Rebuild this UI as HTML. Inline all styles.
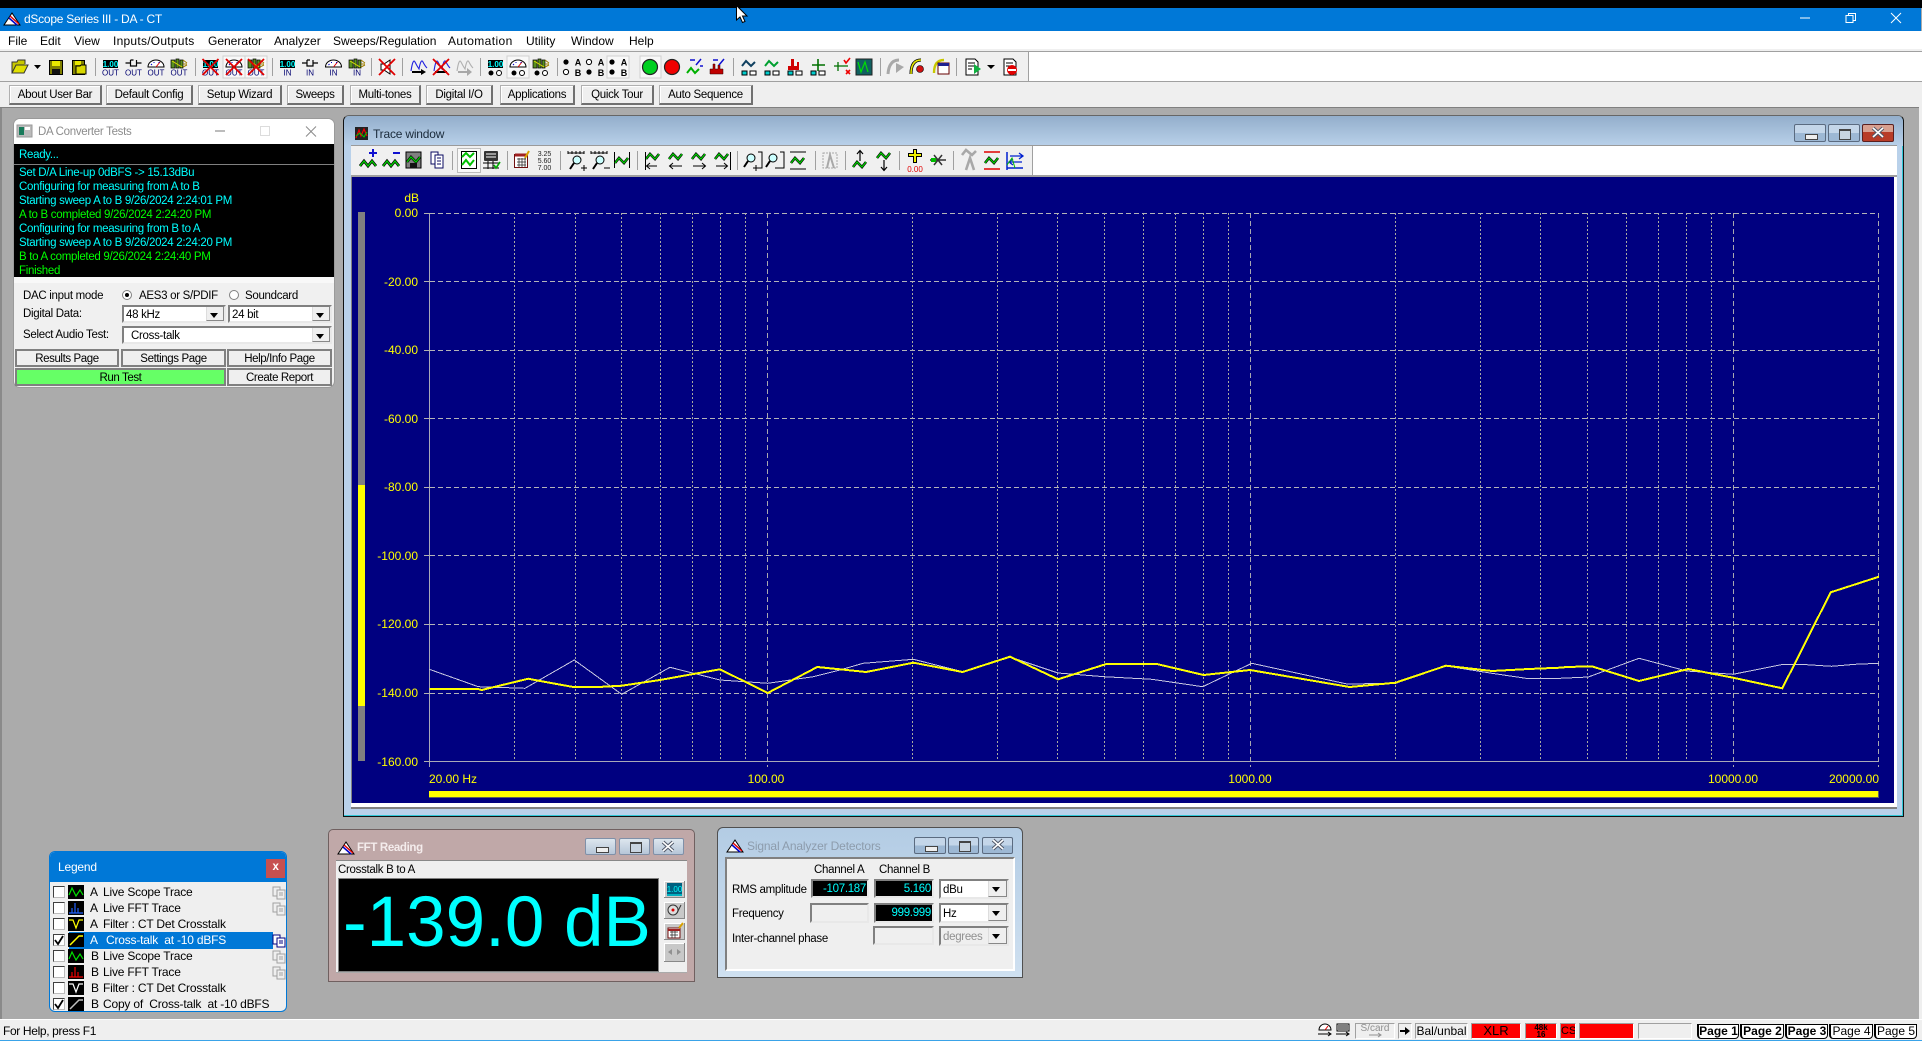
<!DOCTYPE html>
<html><head><meta charset="utf-8"><title>dScope Series III - DA - CT</title>
<style>
html,body{margin:0;padding:0;width:1922px;height:1041px;overflow:hidden;background:#ababab;font:11.5px "Liberation Sans",sans-serif;letter-spacing:-.3px;color:#000}
.a{position:absolute;box-sizing:border-box}
.t{position:absolute;white-space:nowrap;line-height:14px;height:14px}
.t:not(.m):not(.lg){margin-top:1px}
.m{font-size:12px;letter-spacing:0}
.lg{font-size:12px;letter-spacing:-.2px}
.btn{position:absolute;box-sizing:border-box;background:#efefef;border:1px solid #b0b0b0;border-right:2px solid #707070;border-bottom:2px solid #707070;text-align:center;white-space:nowrap;line-height:19px;box-shadow:inset 1px 1px 0 #fff}
.fb{position:absolute;box-sizing:border-box;background:#efefef;border:2px solid #808080;text-align:center;line-height:16px;white-space:nowrap;letter-spacing:-.4px}
.cb{position:absolute;box-sizing:border-box;background:#fff;border:2px solid;border-color:#808080 #e8e8e8 #e8e8e8 #808080;line-height:17px;white-space:nowrap;padding-left:2px}
.cb i{position:absolute;right:0;top:0;bottom:0;width:16px;background:#efefef;border-left:1px solid #ddd;border-bottom:1px solid #888;border-right:1px solid #888}
.cb i:after{content:"";position:absolute;left:3px;top:6px;border:4px solid transparent;border-top:5px solid #000;border-bottom:0}
.wb{position:absolute;box-sizing:border-box;border:1px solid #5b6b80;border-radius:2px;background:linear-gradient(#c4d6e9 0 50%,#9db8d4 50% 100%)}
.mi{position:absolute;left:10px;width:11px;height:4px;background:#eee;border:1px solid #444}
.ri{position:absolute;left:10px;width:10px;height:8px;background:#c8d4e0;border:1px solid #444;border-top-width:2px}
.fd{position:absolute;box-sizing:border-box;background:#000;color:#0ff;border:2px solid;border-color:#808080 #e8e8e8 #e8e8e8 #808080;text-align:right;line-height:16px;padding-right:1px}
.fe{position:absolute;box-sizing:border-box;background:#efefef;border:2px solid;border-color:#808080 #e8e8e8 #e8e8e8 #808080}
.st{position:absolute;box-sizing:border-box;top:1023px;height:16px;border:1px solid;border-color:#a0a0a0 #fff #fff #a0a0a0;text-align:center;line-height:14px;white-space:nowrap;overflow:hidden;font-size:12px;letter-spacing:0}
.pg{position:absolute;top:1024px;height:15px;box-sizing:border-box;border:1px solid #000;border-left-width:2px;border-radius:0 0 4px 4px;background:#fff;text-align:center;line-height:13px;white-space:nowrap;font-size:12px;letter-spacing:0}
.ck{position:absolute;left:53px;width:12px;height:12px;box-sizing:border-box;background:#fff;border:1px solid;border-color:#404040 #bbb #bbb #404040}
svg text{font-family:"Liberation Sans",sans-serif;letter-spacing:0}
</style></head><body>

<!-- frame bars -->
<div class="a" style="left:0;top:0;width:1922px;height:8px;background:#000"></div>
<div class="a" style="left:0;top:8px;width:1921px;height:23px;background:#0078d7"></div>
<div class="a" style="left:0;top:31px;width:1922px;height:19px;background:#fff"></div>
<div class="a" style="left:0;top:49px;width:1922px;height:2px;background:#f0f0f0"></div>
<div class="a" style="left:0;top:51px;width:1922px;height:1px;background:#a0a0a0"></div>
<div class="a" style="left:0;top:52px;width:1922px;height:29px;background:#fff"></div>
<div class="a" style="left:0;top:52px;width:1029px;height:29px;background:#f0f0f0;border-right:1px solid #a0a0a0"></div>
<div class="a" style="left:0;top:81px;width:1922px;height:1px;background:#a0a0a0"></div>
<div class="a" style="left:0;top:82px;width:1922px;height:25px;background:#efefef"></div>
<div class="a" style="left:0;top:107px;width:1920px;height:1px;background:#808080"></div>
<div class="a" style="left:0;top:108px;width:2px;height:912px;background:#8a8a8a"></div>
<div class="a" style="left:1919px;top:107px;width:3px;height:913px;background:#efefef"></div>
<div class="a" style="left:0;top:1019px;width:1922px;height:1px;background:#fff"></div>
<div class="a" style="left:0;top:1020px;width:1922px;height:20px;background:#efefef"></div>
<div class="a" style="left:0;top:1040px;width:1922px;height:1px;background:#3aa3e8"></div>

<div class="t m" style="left:24px;top:12px;color:#fff;letter-spacing:-.25px">dScope Series III - DA - CT</div>
<div class="t m" style="left:8px;top:34px">File</div>
<div class="t m" style="left:40px;top:34px">Edit</div>
<div class="t m" style="left:74px;top:34px">View</div>
<div class="t m" style="left:113px;top:34px;letter-spacing:.25px">Inputs/Outputs</div>
<div class="t m" style="left:208px;top:34px">Generator</div>
<div class="t m" style="left:274px;top:34px">Analyzer</div>
<div class="t m" style="left:333px;top:34px">Sweeps/Regulation</div>
<div class="t m" style="left:448px;top:34px;letter-spacing:.4px">Automation</div>
<div class="t m" style="left:526px;top:34px">Utility</div>
<div class="t m" style="left:571px;top:34px">Window</div>
<div class="t m" style="left:629px;top:34px">Help</div>

<div class="btn" style="left:9px;top:85px;width:93px;height:20px">About User Bar</div>
<div class="btn" style="left:106px;top:85px;width:87px;height:20px">Default Config</div>
<div class="btn" style="left:198px;top:85px;width:84px;height:20px">Setup Wizard</div>
<div class="btn" style="left:287px;top:85px;width:57px;height:20px">Sweeps</div>
<div class="btn" style="left:350px;top:85px;width:71px;height:20px">Multi-tones</div>
<div class="btn" style="left:426px;top:85px;width:67px;height:20px">Digital I/O</div>
<div class="btn" style="left:500px;top:85px;width:75px;height:20px">Applications</div>
<div class="btn" style="left:581px;top:85px;width:73px;height:20px">Quick Tour</div>
<div class="btn" style="left:659px;top:85px;width:94px;height:20px">Auto Sequence</div>

<!-- DA Converter window -->
<div class="a" style="left:14px;top:119px;width:320px;height:268px;background:#f0f0f0;border-radius:6px;overflow:hidden;box-shadow:0 0 0 1px #9a9a9a">
 <div class="a" style="left:0;top:0;width:320px;height:25px;background:#fff"></div>
 <div class="a" style="left:0;top:25px;width:320px;height:133px;background:#000"></div>
 <div class="a" style="left:0;top:45px;width:320px;height:1px;background:#808080"></div>
 <div class="a" style="left:0;top:158px;width:320px;height:6px;background:#f8f8f8"></div>
</div>
<div class="t" style="left:38px;top:124px;color:#8c8c8c">DA Converter Tests</div>
<div class="t" style="left:19px;top:147px;color:#0ff">Ready...</div>
<div class="t" style="left:19px;top:165px;color:#0ff">Set D/A Line-up 0dBFS -&gt; 15.13dBu</div>
<div class="t" style="left:19px;top:179px;color:#0ff">Configuring for measuring from A to B</div>
<div class="t" style="left:19px;top:193px;color:#0ff">Starting sweep A to B 9/26/2024 2:24:01 PM</div>
<div class="t" style="left:19px;top:207px;color:#0f0">A to B completed 9/26/2024 2:24:20 PM</div>
<div class="t" style="left:19px;top:221px;color:#0ff">Configuring for measuring from B to A</div>
<div class="t" style="left:19px;top:235px;color:#0ff">Starting sweep A to B 9/26/2024 2:24:20 PM</div>
<div class="t" style="left:19px;top:249px;color:#0f0">B to A completed 9/26/2024 2:24:40 PM</div>
<div class="t" style="left:19px;top:263px;color:#0f0">Finished</div>
<div class="t" style="left:23px;top:288px">DAC input mode</div>
<div class="t" style="left:139px;top:288px">AES3 or S/PDIF</div>
<div class="t" style="left:245px;top:288px">Soundcard</div>
<div class="t" style="left:23px;top:306px">Digital Data:</div>
<div class="t" style="left:23px;top:327px">Select Audio Test:</div>
<div class="cb" style="left:122px;top:305px;width:104px;height:18px">48 kHz<i></i></div>
<div class="cb" style="left:228px;top:305px;width:104px;height:18px">24 bit<i></i></div>
<div class="cb" style="left:122px;top:326px;width:210px;height:18px;padding-left:7px">Cross-talk<i></i></div>
<div class="fb" style="left:15px;top:349px;width:104px;height:18px">Results Page</div>
<div class="fb" style="left:121px;top:349px;width:105px;height:18px">Settings Page</div>
<div class="fb" style="left:227px;top:349px;width:105px;height:18px">Help/Info Page</div>
<div class="fb" style="left:15px;top:368px;width:211px;height:18px;background:#66ff66">Run Test</div>
<div class="fb" style="left:227px;top:368px;width:105px;height:18px">Create Report</div>

<!-- Trace window -->
<div class="a" style="left:343px;top:115px;width:1561px;height:702px;background:#b9d1ea;border:1px solid #111;border-top-color:#666;border-radius:6px 6px 0 0;box-shadow:inset -1px -1px 0 #30c8d8"></div>
<div class="a" style="left:344px;top:116px;width:1559px;height:30px;background:linear-gradient(#93aecb,#b9d1ea);border-radius:5px 5px 0 0"></div>
<div class="a" style="left:351px;top:145px;width:1546px;height:1px;background:#9a9a9a"></div>
<div class="a" style="left:351px;top:146px;width:1546px;height:29px;background:#fff"></div>
<div class="a" style="left:351px;top:146px;width:682px;height:29px;background:#f0f0f0;border-right:1px solid #a0a0a0"></div>
<div class="a" style="left:351px;top:175px;width:1546px;height:2px;background:#a0a0a0"></div>
<div class="a" style="left:352px;top:177px;width:1542px;height:626px;background:#000080"></div>
<div class="a" style="left:351px;top:177px;width:1px;height:630px;background:#808080"></div>
<div class="a" style="left:351px;top:803px;width:1546px;height:4px;background:#fff"></div>
<div class="a" style="left:1894px;top:177px;width:3px;height:630px;background:#fff"></div>
<div class="a" style="left:351px;top:807px;width:1546px;height:2px;background:#808080"></div>
<div class="t m" style="left:373px;top:127px;color:#1a2a3a;letter-spacing:-.2px">Trace window</div>
<div class="wb" style="left:1794px;top:124px;width:32px;height:18px"><div class="mi" style="top:9px"></div></div>
<div class="wb" style="left:1828px;top:124px;width:32px;height:18px"><div class="ri" style="top:4px"></div></div>
<div class="wb" style="left:1862px;top:124px;width:32px;height:18px;border-color:#5a2020;background:linear-gradient(#d8a090 0 45%,#b83c28 45% 100%)"></div>

<!-- Legend -->
<div class="a" style="left:49px;top:851px;width:238px;height:161px;background:#efefef;border:1px solid #0078d7;border-radius:6px;overflow:hidden">
 <div class="a" style="left:0;top:0;width:238px;height:30px;background:#0078d7"></div>
 <div class="a" style="left:19px;top:80px;width:204px;height:17px;background:#0078d7"></div>
</div>
<div class="t lg" style="left:58px;top:860px;color:#fff">Legend</div>
<div class="a" style="left:266px;top:859px;width:19px;height:19px;background:#c75050;color:#fff;text-align:center;font-weight:bold;line-height:17px">x</div>
<div class="ck" style="top:886px"></div><div class="ck" style="top:902px"></div><div class="ck" style="top:918px"></div><div class="ck" style="top:934px"></div><div class="ck" style="top:950px"></div><div class="ck" style="top:966px"></div><div class="ck" style="top:982px"></div><div class="ck" style="top:998px"></div>
<div class="t lg" style="left:90px;top:885px">A</div><div class="t lg" style="left:103px;top:885px">Live Scope Trace</div>
<div class="t lg" style="left:90px;top:901px">A</div><div class="t lg" style="left:103px;top:901px">Live FFT Trace</div>
<div class="t lg" style="left:90px;top:917px">A</div><div class="t lg" style="left:103px;top:917px">Filter : CT Det Crosstalk</div>
<div class="t lg" style="left:90px;top:933px;color:#fff">A</div><div class="t lg" style="left:106px;top:933px;color:#fff;white-space:pre">Cross-talk  at -10 dBFS</div>
<div class="t lg" style="left:91px;top:949px">B</div><div class="t lg" style="left:103px;top:949px">Live Scope Trace</div>
<div class="t lg" style="left:91px;top:965px">B</div><div class="t lg" style="left:103px;top:965px">Live FFT Trace</div>
<div class="t lg" style="left:91px;top:981px">B</div><div class="t lg" style="left:103px;top:981px">Filter : CT Det Crosstalk</div>
<div class="t lg" style="left:91px;top:997px">B</div><div class="t lg" style="left:103px;top:997px;white-space:pre">Copy of  Cross-talk  at -10 dBFS</div>

<!-- FFT Reading -->
<div class="a" style="left:328px;top:829px;width:367px;height:153px;background:#c0a8a8;border:1px solid #706060;border-radius:5px 5px 0 0"></div>
<div class="a" style="left:336px;top:860px;width:351px;height:113px;background:#efefef;border-top:1px solid #888;border-bottom:1px solid #aaa"></div>
<div class="a" style="left:338px;top:878px;width:321px;height:94px;background:#000;border:1px solid #808080"></div>
<div class="t" style="left:357px;top:840px;color:#f4ecec;font-weight:bold;letter-spacing:-.35px">FFT Reading</div>
<div class="t" style="left:338px;top:862px">Crosstalk B to A</div>
<div class="t" style="left:343px;top:883px;margin-top:0;height:80px;line-height:80px;font-size:71px;letter-spacing:0;color:#0ff">-139.0 dB</div>
<div class="wb" style="left:585px;top:838px;width:31px;height:17px;border-color:#8090a8;background:linear-gradient(#dde6ee,#b6c6d8)"><div class="mi" style="top:8px"></div></div>
<div class="wb" style="left:619px;top:838px;width:31px;height:17px;border-color:#8090a8;background:linear-gradient(#dde6ee,#b6c6d8)"><div class="ri" style="top:3px"></div></div>
<div class="wb" style="left:653px;top:838px;width:31px;height:17px;border-color:#8090a8;background:linear-gradient(#dde6ee,#b6c6d8)"></div>
<div class="a" style="left:664px;top:881px;width:21px;height:17px;background:#c8c8c8;border-right:1px solid #888;border-bottom:1px solid #888;box-shadow:inset 1px 1px 0 #fff"></div>
<div class="a" style="left:664px;top:902px;width:21px;height:17px;background:#c8c8c8;border-right:1px solid #888;border-bottom:1px solid #888;box-shadow:inset 1px 1px 0 #fff"></div>
<div class="a" style="left:664px;top:923px;width:21px;height:17px;background:#c8c8c8;border-right:1px solid #888;border-bottom:1px solid #888;box-shadow:inset 1px 1px 0 #fff"></div>
<div class="a" style="left:664px;top:943px;width:21px;height:19px;background:#c8c8c8;border-right:1px solid #888;border-bottom:1px solid #888;box-shadow:inset 1px 1px 0 #fff"></div>

<!-- Signal Analyzer Detectors -->
<div class="a" style="left:717px;top:827px;width:306px;height:151px;background:linear-gradient(#b3cce4,#cfe0f0);border:1px solid #505050;border-radius:6px 6px 0 0"></div>
<div class="a" style="left:725px;top:857px;width:290px;height:114px;background:#efefef;border:2px solid;border-color:#808080 #fff #fff #808080"></div>
<div class="t m" style="left:747px;top:839px;color:#8d9cac;letter-spacing:-.15px">Signal Analyzer Detectors</div>
<div class="wb" style="left:914px;top:837px;width:32px;height:17px"><div class="mi" style="top:8px"></div></div>
<div class="wb" style="left:948px;top:837px;width:31px;height:17px"><div class="ri" style="top:3px"></div></div>
<div class="wb" style="left:982px;top:837px;width:31px;height:17px"></div>
<div class="t" style="left:814px;top:862px">Channel A</div>
<div class="t" style="left:879px;top:862px">Channel B</div>
<div class="t" style="left:732px;top:882px">RMS amplitude</div>
<div class="t" style="left:732px;top:906px">Frequency</div>
<div class="t" style="left:732px;top:931px">Inter-channel phase</div>
<div class="fd" style="left:811px;top:879px;width:58px;height:19px">-107.187</div>
<div class="fd" style="left:874px;top:879px;width:60px;height:19px">5.160</div>
<div class="cb" style="left:939px;top:879px;width:70px;height:20px;line-height:18px">dBu<i style="width:17px"></i></div>
<div class="fe" style="left:810px;top:903px;width:59px;height:20px"></div>
<div class="fd" style="left:874px;top:903px;width:60px;height:20px">999.999</div>
<div class="cb" style="left:939px;top:903px;width:70px;height:20px;line-height:18px">Hz<i style="width:17px"></i></div>
<div class="fe" style="left:873px;top:926px;width:61px;height:19px"></div>
<div class="cb" style="left:939px;top:926px;width:70px;height:20px;line-height:18px;background:#efefef;color:#909090">degrees<i style="width:17px"></i></div>

<!-- Status bar -->
<div class="t" style="left:3px;top:1023px;font-size:12px;letter-spacing:-.35px">For Help, press F1</div>
<div class="st" style="left:1355px;width:40px;color:#909090;font-size:10px;line-height:10px">S/card</div>
<div class="st" style="left:1398px;width:14px"></div>
<div class="st" style="left:1415px;width:53px">Bal/unbal</div>
<div class="st" style="left:1471px;width:50px;background:#f00;font-size:13px">XLR</div>
<div class="st" style="left:1525px;width:32px;background:#f00;font-size:8px;line-height:7px;font-weight:bold">48k<br>16</div>
<div class="st" style="left:1560px;width:16px;background:#f00;font-size:11px">CS</div>
<div class="st" style="left:1579px;width:55px;background:#f00"></div>
<div class="st" style="left:1638px;width:54px"></div>
<div class="pg" style="left:1697px;width:42px;font-weight:bold">Page 1</div>
<div class="pg" style="left:1740px;width:44px;font-weight:bold">Page 2</div>
<div class="pg" style="left:1785px;width:43px;font-weight:bold">Page 3</div>
<div class="pg" style="left:1829px;width:44px">Page 4</div>
<div class="pg" style="left:1874px;width:43px">Page 5</div>

<!-- graphics overlay -->
<svg class="a" style="left:0;top:0;pointer-events:none" width="1922" height="1041" viewBox="0 0 1922 1041" xmlns="http://www.w3.org/2000/svg">
<defs>
 <g id="tri"><path d="M0 -6 L8 6 H-8 Z" fill="#fff" stroke="#000"/><path d="M-2 -3 L7 5" stroke="#d00" stroke-width="1.5"/><path d="M-3 -1 L5 6" stroke="#00c" stroke-width="1.5"/></g>
 <g id="wv"><polyline points="-8,5 -4,0 0,5 4,0 8,5" fill="none" stroke="#000" stroke-width="2.8"/><polyline points="-8,5 -4,0 0,5 4,0 8,5" fill="none" stroke="#00d000" stroke-width="1.4"/></g>
 <g id="wvs"><polyline points="-7,2 -3,-3 2,2 6,-3" fill="none" stroke="#000" stroke-width="2.6"/><polyline points="-7,2 -3,-3 2,2 6,-3" fill="none" stroke="#00d000" stroke-width="1.3"/></g>
 <g id="xx"><path d="M-8 -8 L8 8 M8 -8 L-8 8" stroke="#e00000" stroke-width="1.800" fill="none"/></g>
 <g id="sw"><path d="M-8 -5H-3M-3 -8V-2H0M0 -8H-3M3 -8V-2H0M3 -5H8" stroke="#000" fill="none" stroke-width="1.2"/></g>
 <g id="ga"><path d="M-8 -1A8 7 0 0 1 8 -1Z" fill="#fff" stroke="#000"/><path d="M0 -1L4 -6" stroke="#d00"/><path d="M-5 -3L-4 -4M-2 -6V-5M3 -6V-5" stroke="#00c"/></g>
 <g id="no"><path d="M-8 -8h4v8h-4zM-3 -9h3v9h-3zM1 -8h3v8h-3z" fill="#5a8f20" stroke="#000" stroke-width=".7"/><path d="M4 -8L8 -5M4 -4H8M4 -1L8 -3" stroke="#a08000"/><path d="M-7 -7L3 -1" stroke="#dddd00"/></g>
 <g id="ab"><circle cx="-6" cy="-5" r="2.6" fill="#000"/><circle cx="-6" cy="5" r="2.6" fill="#fff" stroke="#000"/></g>
 <g id="cp"><path d="M-6 -5h7v9h-7z" fill="#efefef" stroke="#a0a0a0"/><path d="M-2 -2h8v9h-8z" fill="#efefef" stroke="#a0a0a0"/><path d="M0 1h4M0 3h4" stroke="#a0a0a0"/></g>
 <g id="mg"><circle cx="0" cy="-2" r="4" fill="#cff" stroke="#000"/><path d="M-3 1L-7 7" stroke="#000" stroke-width="2"/></g>
</defs>

<!-- window icons -->
<use href="#tri" x="12" y="19"/>
<use href="#tri" x="346" y="848"/>
<use href="#tri" x="735" y="846"/>
<g><rect x="17" y="125" width="15" height="12" fill="#bbb" stroke="#999"/><rect x="19" y="127" width="5" height="8" fill="#187a5a"/><rect x="25" y="127" width="5" height="3" fill="#fff"/></g>
<g><rect x="355" y="127" width="13" height="13" fill="#222"/><path d="M356 138L359 130L361 136L364 129L367 136" fill="none" stroke="#e00" stroke-width="1.2"/><path d="M356 136L360 133L364 137L367 132" fill="none" stroke="#0c0" stroke-width="1"/></g>

<!-- caption buttons -->
<path d="M1800 18H1810" stroke="#fff"/>
<path d="M1846 15.500H1853V22.500H1846ZM1848.500 15.500V13.500H1855.500V20.500H1853" fill="none" stroke="#fff"/>
<path d="M1891 13L1901 23M1901 13L1891 23" stroke="#fff"/>
<!-- DA window caption (inactive) -->
<path d="M215 131H225" stroke="#7a7a7a"/>
<rect x="260.500" y="126.500" width="9" height="9" fill="none" stroke="#dcdcdc"/>
<path d="M306 126.500L316 136.500M316 126.500L306 136.500" stroke="#8a8a8a"/>
<!-- X glyphs with outline -->
<path d="M1873 128L1883 137M1883 128L1873 137M663 842L673 851M673 842L663 851M993 840L1003 849M1003 840L993 849" stroke="#505868" stroke-width="3.600"/>
<path d="M1873 128L1883 137M1883 128L1873 137M663 842L673 851M673 842L663 851M993 840L1003 849M1003 840L993 849" stroke="#fff" stroke-width="1.600"/>

<!-- cursor -->
<path d="M736.500 5.500V20L740 17L742.500 22.500L745 21.500L742.500 16H747Z" fill="#fff" stroke="#000"/>

<!-- main toolbar icons -->
<g fill="none">
<path d="M12 73V62H17L18 60H25V64" stroke="#333" fill="#c8c800"/><path d="M12 73L16 65H28L24 73Z" fill="#e0e000" stroke="#333"/>
<path d="M34 65H41L37.500 69Z" fill="#000"/>
<rect x="49.500" y="60.500" width="13" height="14" fill="#808000" stroke="#000"/><rect x="52" y="61" width="8" height="5" fill="#e8e800"/><rect x="52" y="69" width="8" height="5" fill="#111"/>
<rect x="72.500" y="60.500" width="12" height="14" fill="#808000" stroke="#000"/><rect x="75" y="61" width="6" height="4" fill="#e8e800"/><path d="M76 74V66H80L81 65H86V74Z" fill="#d8d800" stroke="#000"/>
<path d="M95.500 58V76M195.500 58V76M272.500 58V76M371.500 58V76M402.500 58V76M480.500 58V76M557.500 58V76M733.500 58V76M880.500 58V76M956.500 58V76" stroke="#a0a0a0"/>
</g>
<g text-anchor="middle" font-size="8">
<rect x="103" y="60" width="15" height="8" fill="#000"/><text x="110.500" y="67" fill="#0ff" font-weight="bold">1.00</text><text x="110.500" y="75.500" fill="#000070">OUT</text>
<use href="#sw" x="133.500" y="68"/><text x="133.500" y="75.500" fill="#000070">OUT</text>
<use href="#ga" x="156" y="68"/><text x="156" y="75.500" fill="#000070">OUT</text>
<use href="#no" x="179" y="68"/><text x="179" y="75.500" fill="#000070">OUT</text>
<rect x="203" y="60" width="15" height="8" fill="#000"/><text x="210.500" y="67" fill="#0ff" font-weight="bold">1.00</text><text x="210.500" y="75.500" fill="#000070">OUT</text><use href="#xx" x="210.500" y="67"/>
<rect x="223" y="56" width="22" height="22" fill="#f8f8f8" stroke="#d0d0d0"/><rect x="245" y="56" width="22" height="22" fill="#f8f8f8" stroke="#d0d0d0"/>
<use href="#ga" x="234" y="68"/><text x="234" y="75.500" fill="#000070">OUT</text><use href="#xx" x="234" y="67"/>
<use href="#no" x="256" y="68"/><text x="256" y="75.500" fill="#000070">OUT</text><use href="#xx" x="256" y="67"/>
<rect x="280" y="60" width="15" height="8" fill="#000"/><text x="287.500" y="67" fill="#0ff" font-weight="bold">1.00</text><text x="287.500" y="75.500" fill="#000070">IN</text>
<use href="#sw" x="310" y="68"/><text x="310" y="75.500" fill="#000070">IN</text>
<use href="#ga" x="333.500" y="68"/><text x="333.500" y="75.500" fill="#000070">IN</text>
<use href="#no" x="357" y="68"/><text x="357" y="75.500" fill="#000070">IN</text>
<path d="M381 64H384L390 60V74L384 70H381Z" fill="#fff" stroke="#000"/><use href="#xx" x="387" y="67"/>
<path d="M411 71Q413 58 415 62T419 69Q421 58 423 62T427 68" fill="none" stroke="#2020e0" stroke-width="1.100"/><path d="M412 72H423" stroke="#000" stroke-width="2"/><path d="M421 69L426 72L421 75Z" fill="#000"/>
<path d="M434 71Q436 58 438 62T442 69Q444 58 446 62T450 68" fill="none" stroke="#2020e0" stroke-width="1.100"/><path d="M435 72H447" stroke="#000" stroke-width="2"/><use href="#xx" x="441" y="67"/>
<path d="M457 71Q459 58 461 62T465 69Q467 58 469 62T473 68" fill="none" stroke="#b0b0b0" stroke-width="1.100"/><path d="M458 72H469" stroke="#a8a8a8" stroke-width="2"/><path d="M467 68L472 72L467 76Z" fill="#a8a8a8"/>
<rect x="488" y="60" width="15" height="8" fill="#000"/><text x="495.500" y="67" fill="#0ff" font-weight="bold">1.00</text><circle cx="491" cy="73" r="2.500" fill="#000"/><circle cx="499" cy="73" r="2.500" fill="#fff" stroke="#000"/>
<rect x="507" y="56" width="22" height="22" fill="#f8f8f8" stroke="#d0d0d0"/><use href="#ga" x="518" y="68"/><circle cx="514" cy="73" r="2.500" fill="#000"/><circle cx="522" cy="73" r="2.500" fill="#fff" stroke="#000"/>
<use href="#no" x="541" y="68"/><circle cx="537" cy="73" r="2.500" fill="#000"/><circle cx="545" cy="73" r="2.500" fill="#fff" stroke="#000"/>
<use href="#ab" x="572" y="67"/><text x="578" y="65.500" font-size="9" font-weight="bold" fill="#000">A</text><text x="578" y="76" font-size="9" font-weight="bold" fill="#000">B</text>
<circle cx="589" cy="62" r="2.600" fill="#fff" stroke="#000"/><circle cx="589" cy="72" r="2.600" fill="#000"/><text x="601" y="65.500" font-size="9" font-weight="bold" fill="#000">A</text><text x="601" y="76" font-size="9" font-weight="bold" fill="#000">B</text>
<rect x="607" y="56" width="22" height="22" fill="#f8f8f8" stroke="#d0d0d0"/><circle cx="612" cy="62" r="2.600" fill="#000"/><circle cx="612" cy="72" r="2.600" fill="#000"/><text x="624" y="65.500" font-size="9" font-weight="bold" fill="#000">A</text><text x="624" y="76" font-size="9" font-weight="bold" fill="#000">B</text>
</g>
<g>
<rect x="640" y="56" width="21" height="22" fill="#f8f8f8" stroke="#d0d0d0"/>
<circle cx="650" cy="67" r="7.500" fill="#00d020" stroke="#222" stroke-width="1.200"/>
<circle cx="672" cy="67" r="7.500" fill="#f00000" stroke="#222" stroke-width="1.200"/>
<polyline points="687,73 691,68 695,73 699,69" fill="none" stroke="#00b000" stroke-width="2"/><path d="M690 60h5M696 65l5 -6M700 66h3" stroke="#1010d0" stroke-width="1.500" fill="none"/>
<path d="M710 74V69H713V64H715V69H718V65H720V69H723V74Z" fill="#c00000" stroke="#300" stroke-width=".5"/><path d="M713 60h5M719 65l5 -6" stroke="#1010d0" stroke-width="1.500" fill="none"/>
<path d="M742 66L746 61L751 66L755 62" fill="none" stroke="#104060" stroke-width="2"/>
<path d="M765 66L769 61L774 66L778 62" fill="none" stroke="#00a030" stroke-width="2"/>
<path d="M788 70V66H791V59H794V66H797V62H799V70Z" fill="#d00000"/>
<path d="M812 65H825M818 59V71" stroke="#007000" stroke-width="1.600"/>
<path d="M834 66H848M838 62V71" stroke="#007000" stroke-width="1.300"/><path d="M844 60L846 63L850 58" stroke="#e00" fill="none" stroke-width="1.600"/><path d="M846 70L850 74M850 70L846 74" stroke="#e00" stroke-width="1.600"/>
<rect x="856" y="59" width="16" height="16" fill="#106060" stroke="#222"/><path d="M858 62L861 72L865 62L868 72" fill="none" stroke="#00e000" stroke-width="1.200"/>
<g fill="#fff" stroke="#000"><rect x="742" y="71" width="5" height="4" fill="#0cc"/><rect x="750" y="71" width="6" height="4"/><rect x="765" y="71" width="5" height="4" fill="#0cc"/><rect x="773" y="71" width="6" height="4"/><rect x="788" y="71" width="5" height="4" fill="#0cc"/><rect x="796" y="71" width="6" height="4"/><rect x="811" y="71" width="5" height="4" fill="#0cc"/><rect x="819" y="71" width="6" height="4"/></g>
<path d="M888 74Q889 60 899 60" fill="none" stroke="#a8a8a8" stroke-width="3"/><path d="M896 63L904 67L896 73Z" fill="#a8a8a8"/>
<path d="M911 74Q911 60 921 60" fill="none" stroke="#000" stroke-width="3"/><path d="M911 74Q911 60 921 60" fill="none" stroke="#e8e800" stroke-width="1.500"/><circle cx="920" cy="69" r="3.500" fill="#d01010" stroke="#000" stroke-width=".6"/>
<path d="M934 73Q934 60 944 60" fill="none" stroke="#c8c800" stroke-width="2.400"/><rect x="938" y="63" width="11" height="11" fill="#fff" stroke="#600"/><rect x="938" y="63" width="11" height="3" fill="#202090"/>
<path d="M966 59H975L978 62V75H966Z" fill="#fff" stroke="#000"/><path d="M968 63H975M968 66H975M968 69H972" stroke="#000"/><path d="M974 64L981 69L974 74Z" fill="#10b040"/>
<path d="M987 65H995L991 69Z" fill="#000"/>
<path d="M1004 59H1013L1016 62V75H1004Z" fill="#fff" stroke="#000"/><path d="M1006 63H1013M1006 66H1013" stroke="#000"/><circle cx="1012" cy="70" r="5" fill="#e00000"/><rect x="1008" y="69" width="8" height="2" fill="#fff"/>
</g>

<!-- trace toolbar -->
<g fill="none" stroke="#a0a0a0"><path d="M452.500 151V170M507.500 151V170M560.500 151V170M637.500 151V170M737.500 151V170M815.500 151V170M845.500 151V170M899.500 151V170M953.500 151V170"/></g>
<rect x="457.500" y="148.500" width="23" height="24" fill="#f8f8f8" stroke="#bbb"/>
<use href="#wv" x="368" y="161"/><path d="M369 153H377M373 149V157" stroke="#1010d0" stroke-width="2"/>
<use href="#wv" x="391" y="161"/><path d="M393 153H400" stroke="#1010d0" stroke-width="2"/>
<rect x="406" y="152" width="15" height="16" fill="#808080" stroke="#000"/><use href="#wvs" x="414" y="160"/><rect x="410" y="163" width="7" height="5" fill="#111"/>
<path d="M431 152H438V164H431Z" fill="#fff" stroke="#0a0a60"/><path d="M435 155H443V168H435Z" fill="#fff" stroke="#0a0a60"/><path d="M437 158H441M437 161H441M437 164H441" stroke="#0a0a60"/>
<g transform="translate(469,160)"><rect x="-7.500" y="-8.500" width="15" height="17" fill="#fff" stroke="#000"/><polyline points="-7,-3 -3,-7 1,-3 5,-7" fill="none" stroke="#00c000" stroke-width="2"/><polyline points="-7,5 -3,0 1,5 5,0" fill="none" stroke="#00c000" stroke-width="2"/></g>
<g transform="translate(491,160)"><rect x="-7" y="-9" width="14" height="10" rx="1" fill="#333"/><path d="M-5 -6H5M-5 -3H5" stroke="#fff"/><path d="M-8 3H8M-8 8H8M-3 1V9M2 1V9" stroke="#000"/><path d="M3 5L5 8L9 2" stroke="#0a0" fill="none" stroke-width="1.600"/></g>
<g transform="translate(521,160)"><rect x="-6.500" y="-5.500" width="13" height="13" fill="#fff" stroke="#701010"/><path d="M-6 -5H7" stroke="#a02020" stroke-width="3"/><path d="M-4 -1H5M-4 2H5M-4 5H5M-2 -2V7M1 -2V7M4 -2V7" stroke="#222" stroke-width=".7"/><path d="M4 -2L8 -9" stroke="#d8a000" stroke-width="2"/></g>
<g text-anchor="middle" font-size="7" fill="#222"><text x="544.500" y="156">3.25</text><text x="544.500" y="163">5.60</text><text x="544.500" y="170">7.00</text></g>
<g fill="none" stroke="#000"><path d="M568 153H584M568 151V154M572 151V154M576 151V154M580 151V154M584 151V154M591 153H607M591 151V154M595 151V154M599 151V154M603 151V154M607 151V154"/><path d="M614.500 152V168M629.500 152V168"/></g>
<use href="#mg" x="577" y="162"/><path d="M581 168H587M584 165V171" stroke="#000"/>
<use href="#mg" x="600" y="162"/><path d="M604 168H610" stroke="#000"/>
<use href="#wvs" x="622" y="161"/>
<use href="#wvs" x="653" y="157"/><path d="M645.500 152V170M647 166H657M650 163L646.500 166L650 169" fill="none" stroke="#000"/>
<use href="#wvs" x="676" y="157"/><path d="M670 166H682M673 163L669.500 166L673 169" fill="none" stroke="#000"/>
<use href="#wvs" x="699" y="157"/><path d="M693 166H705M702 163L705.500 166L702 169" fill="none" stroke="#000"/>
<use href="#wvs" x="722" y="157"/><path d="M716 166H727M724 163L727.500 166L724 169M730.500 152V170" fill="none" stroke="#000"/>
<use href="#mg" x="751" y="160"/><path d="M758 152H762V168H758M753 168H759M756 165V171" fill="none" stroke="#000"/>
<use href="#mg" x="773" y="160"/><path d="M780 152H784V168H780M775 168H781" fill="none" stroke="#000"/>
<path d="M790 152H806M790 169H806" stroke="#000"/><use href="#wvs" x="798" y="161"/>
<path d="M823 153H837V168H823Z" fill="none" stroke="#a8a8a8" stroke-dasharray="2 1"/><path d="M827 168L830 155L834 168" fill="none" stroke="#a8a8a8" stroke-width="2"/>
<use href="#wvs" x="860" y="165"/><path d="M860 151V161M857 154L860 150.500L863 154" fill="none" stroke="#000" stroke-width="1.200"/>
<use href="#wvs" x="884" y="156"/><path d="M884 160V170M881 167L884 170.500L887 167" fill="none" stroke="#000" stroke-width="1.200"/>
<path d="M915 149V163M908 155H922" stroke="#000" stroke-width="4"/><path d="M915 150V162M909 155H921" stroke="#f0f000" stroke-width="2"/><text x="915" y="172" font-size="8" text-anchor="middle" fill="#e00000">0.00</text>
<path d="M930 160H946M934 155L942 165M942 155L934 165" stroke="#333" stroke-width="1.500"/><rect x="931" y="158" width="5" height="4" fill="#0b0"/>
<path d="M962 155L966 150L972 155L976 151M966 170L970 158L974 170" fill="none" stroke="#a8a8a8" stroke-width="2.600"/>
<path d="M984 152H1000M984 169H1000" stroke="#e00000" stroke-width="1.500"/><use href="#wvs" x="992" y="161"/>
<path d="M1007 152V170M1007 168H1023" stroke="#0020d0" stroke-width="1.500"/><path d="M1010 156H1022M1019 153L1023 156L1019 159M1010 162H1022M1013 159L1009 162L1013 165" fill="none" stroke="#0020d0" stroke-width="1.300"/><path d="M1007 165L1012 158L1015 168" fill="none" stroke="#0b0"/>

<!-- plot -->
<g shape-rendering="crispEdges" fill="none">
 <g stroke="#aaaaa0" stroke-dasharray="2 2">
  <path d="M514.500 213V761M575.500 213V761M621.500 213V761M660.500 213V761M692.500 213V761M720.500 213V761M745.500 213V761"/>
  <path d="M912.500 213V761M997.500 213V761M1057.500 213V761M1104.500 213V761M1143.500 213V761M1175.500 213V761M1203.500 213V761M1228.500 213V761"/>
  <path d="M1395.500 213V761M1480.500 213V761M1540.500 213V761M1587.500 213V761M1626.500 213V761M1658.500 213V761M1686.500 213V761M1711.500 213V761"/>
 </g>
 <g stroke="#a8a8b0" stroke-dasharray="5 3">
  <path d="M767.500 213V767M1250.500 213V767M1733.500 213V767M1878.500 213V767"/>
 </g>
 <g stroke="#b4b4b8" stroke-dasharray="5 3">
  <path d="M430 213.500H1879M430 281.500H1879M430 350.500H1879M430 418.500H1879M430 487.500H1879M430 555.500H1879M430 624.500H1879M430 693.500H1879"/>
 </g>
 <path d="M429.500 213V767M430 761.500H1879" stroke="#a8a8b8"/>
 <path d="M424 213.500H430M424 281.500H430M424 350.500H430M424 418.500H430M424 487.500H430M424 555.500H430M424 624.500H430M424 693.500H430M424 761.500H430" stroke="#b0b0b0"/>
 <polyline stroke="#c8c8e0" points="429.300,669.300 478.300,686.700 525,688.300 574.300,660 621.700,694.300 670,667.300 720,680 767.700,683.300 813.300,676.700 840,670 863,663.300 913.500,659.300 962.600,671.700 1010,657 1058,673 1104,676.700 1152,679.300 1202.700,686.700 1251.800,663.300 1347,684 1395.600,683.300 1446,666 1492,673.300 1528.700,678.700 1560,678.300 1588.300,677 1639,658.300 1686.700,671 1733,674.300 1783.300,664.300 1806.700,664.700 1831.700,666.300 1855,664.300 1879,663.300"/>
 <polyline stroke="#ffff00" stroke-width="2" points="429.300,689 478,689 481.700,690 528.300,678.700 540,681 573.300,687 598.300,687 621.700,685.700 660,680 693.300,674 720,669.300 767.700,693 817.300,667 840,669.300 866,672 913.500,662.700 962.600,672 1010,656.700 1058,679.300 1106.300,664 1156.800,664 1203.600,675 1250,670 1349.600,687 1395.600,682.700 1446,665.700 1492,671 1528.700,669 1560,667.700 1566.700,667 1591.700,666.300 1639,681 1688.300,669 1733,677.700 1782.300,688.300 1830.700,592.300 1879,576.700"/>
 <rect x="358" y="212" width="7" height="273" fill="#808080"/>
 <rect x="358" y="485" width="7" height="221" fill="#ffff00"/>
 <rect x="358" y="706" width="7" height="55" fill="#808080"/>
 <rect x="429" y="791" width="1449" height="6" fill="#ffff00"/>
 <rect x="429" y="797" width="1449" height="1" fill="#606060"/>
 <rect x="1878" y="791" width="1" height="7" fill="#606060"/>
</g>
<g font-size="12" fill="#ffff00" text-anchor="end">
 <text x="419" y="202">dB</text>
 <text x="418" y="217">0.00</text><text x="418" y="286">-20.00</text><text x="418" y="354">-40.00</text><text x="418" y="423">-60.00</text><text x="418" y="491">-80.00</text><text x="418" y="560">-100.00</text><text x="418" y="628">-120.00</text><text x="418" y="697">-140.00</text><text x="418" y="766">-160.00</text>
 <text x="1879" y="783">20000.00</text>
</g>
<g font-size="12" fill="#ffff00" text-anchor="middle">
 <text x="766" y="783">100.00</text><text x="1250" y="783">1000.00</text><text x="1733" y="783">10000.00</text>
</g>
<text x="429" y="783" font-size="12" fill="#ffff00">20.00 Hz</text>

<!-- radios -->
<circle cx="127" cy="295" r="4.500" fill="#fff" stroke="#808080"/><circle cx="127" cy="295" r="2" fill="#000"/>
<circle cx="234" cy="295" r="4.500" fill="#fff" stroke="#808080"/>

<!-- legend icons -->
<g fill="#000">
 <rect x="68" y="885" width="16" height="14"/><rect x="68" y="901" width="16" height="14"/><rect x="68" y="917" width="16" height="14"/><rect x="68" y="933" width="16" height="14"/><rect x="68" y="949" width="16" height="14"/><rect x="68" y="965" width="16" height="14"/><rect x="68" y="981" width="16" height="14"/><rect x="68" y="997" width="16" height="14"/>
</g>
<g fill="none">
 <path d="M69 895L72 888L76 896L80 890L83 895" stroke="#00e000" stroke-width="1.200"/>
 <path d="M69 913H83M72 913V908M75 913V903M78 913V908" stroke="#2060ff" stroke-width="1.200"/>
 <path d="M69 920H73L76 928L79 920H83" stroke="#ffff00" stroke-width="1.200"/>
 <path d="M70 945L75 940L79 936H83" stroke="#ffff00" stroke-width="1.500"/>
 <path d="M69 959L72 952L76 960L80 954L83 959" stroke="#00e000" stroke-width="1.200"/>
 <path d="M69 977H83M72 977V972M75 977V967M78 977V972" stroke="#f00000" stroke-width="1.200"/>
 <path d="M69 984H73L76 992L79 984H83" stroke="#fff" stroke-width="1.200"/>
 <path d="M70 1009L75 1004L79 1000H83" stroke="#c0c0c0" stroke-width="1.500"/>
 <path d="M55 940L58 944L63 936M55 1004L58 1008L63 1000" stroke="#000" stroke-width="1.800"/>
</g>
<use href="#cp" x="279" y="892"/><use href="#cp" x="279" y="908"/><use href="#cp" x="279" y="956"/><use href="#cp" x="279" y="972"/>
<g transform="translate(279,940)"><path d="M-6 -5h7v9h-7z" fill="#fff" stroke="#000080"/><path d="M-2 -2h8v9h-8z" fill="#fff" stroke="#000080"/><path d="M0 1h4M0 3h4" stroke="#000080"/></g>

<!-- FFT side buttons -->
<rect x="667" y="883" width="15" height="13" fill="#006080"/><text x="674.500" y="892" font-size="8" text-anchor="middle" fill="#0ff">1.00</text><path d="M667 895H682" stroke="#0ff"/>
<circle cx="673" cy="910" r="5" fill="#ddd" stroke="#333"/><circle cx="673" cy="910" r="1.500" fill="#d00"/><path d="M677 913L681 905" stroke="#333"/>
<rect x="668" y="928" width="12" height="10" fill="#fff" stroke="#701010"/><path d="M668 930H680" stroke="#a02020" stroke-width="2"/><path d="M670 932H678M670 935H678M672 931V938M675 931V938" stroke="#222" stroke-width=".7"/><path d="M679 928L683 923" stroke="#d8a000" stroke-width="2"/>
<path d="M668 952L672 949V955ZM681 952L677 949V955Z" fill="#909090"/>

<!-- status icons -->
<g transform="translate(1325,1031)"><path d="M-6 -1A6 6 0 0 1 6 -1Z" fill="#fff" stroke="#000"/><path d="M0 -1L3 -5" stroke="#d00"/><path d="M-7 3H5M3 1L6 3L3 5" fill="none" stroke="#000"/></g>
<g transform="translate(1343,1031)"><rect x="-6" y="-7" width="12" height="7" fill="#fff" stroke="#000"/><path d="M-4 -6V-1M-2 -6V-1M0 -6V-1M2 -6V-1M4 -6V-1" stroke="#000"/><path d="M-7 3H5M3 1L6 3L3 5" fill="none" stroke="#000"/></g>
<path d="M1369 1035H1380M1378 1033L1381 1035L1378 1037" fill="none" stroke="#909090"/>
<path d="M1400 1031H1407" stroke="#000" stroke-width="2"/><path d="M1405 1027L1410 1031L1405 1035Z" fill="#000"/>
</svg>
</body></html>
